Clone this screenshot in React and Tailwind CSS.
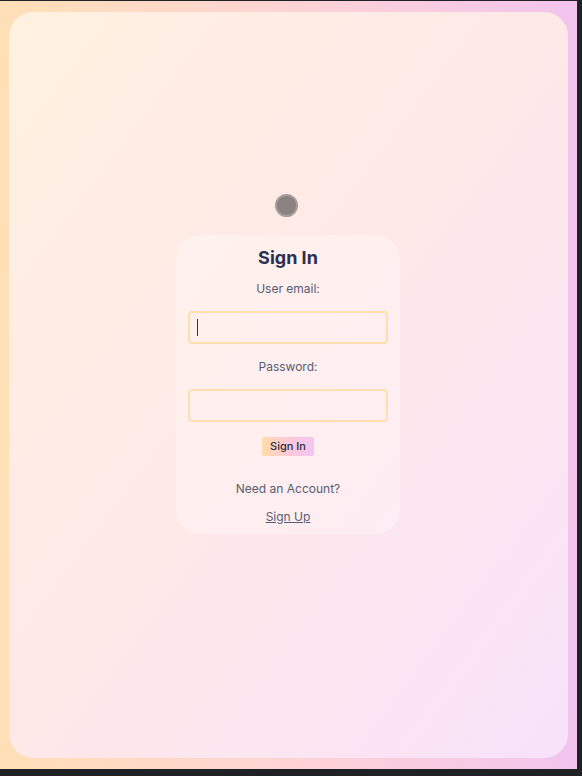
export default function App() {
  return (
    <div className="h-[776px] w-[582px] bg-[#202124] pt-px" style={{ fontFamily: "Inter, 'Noto Sans', sans-serif" }}>
      <div className="h-[768px] w-[577px] bg-gradient-to-r from-[#ffdfb6] via-[#ffd3d4] to-[#f2c4ee] p-[9px] pt-[11px] pb-[11px]">
        <div className="flex h-full flex-col items-center rounded-[24px] bg-gradient-to-br from-[#fff1e0] via-[#ffe8e8] to-[#f7e2fa] pt-[182px]">
          <div className="mb-[18px] h-[23px] w-[23px] -translate-x-[2px] rounded-full border-2 border-[#a59c9c] bg-[#8b8181]" />
          <div className="mr-[1px] flex w-[224px] flex-col items-center rounded-[24px] bg-white/30 px-[12px] pt-[10px] pb-[7px] text-[#585c72]">
            <h1 className="text-[18px] font-bold leading-[26px] text-[#2a3050]">Sign In</h1>
            <label className="mt-[8px] text-[12px] leading-[20px]">User email:</label>
            <div className="mt-[12px] flex h-[33px] w-full items-center rounded-[4px] border-2 border-[#ffdfb0] px-[7px]">
              <span className="h-[17px] w-px bg-[#333]" />
            </div>
            <label className="mt-[13px] text-[12px] leading-[20px]">Password:</label>
            <div className="mt-[12px] h-[33px] w-full rounded-[4px] border-2 border-[#ffdfb0]" />
            <button className="mt-[15px] rounded-[2px] bg-gradient-to-r from-[#ffdcaa] via-[#ffc8d8] to-[#f0c6f2] px-[8px] text-[11px] font-medium leading-[19px] text-[#2b2b3a]">
              Sign In
            </button>
            <p className="mt-[23px] text-[12px] leading-[20px]">Need an Account?</p>
            <a className="mt-[8px] text-[12px] leading-[20px] underline">Sign Up</a>
          </div>
        </div>
      </div>
    </div>
  );
}
